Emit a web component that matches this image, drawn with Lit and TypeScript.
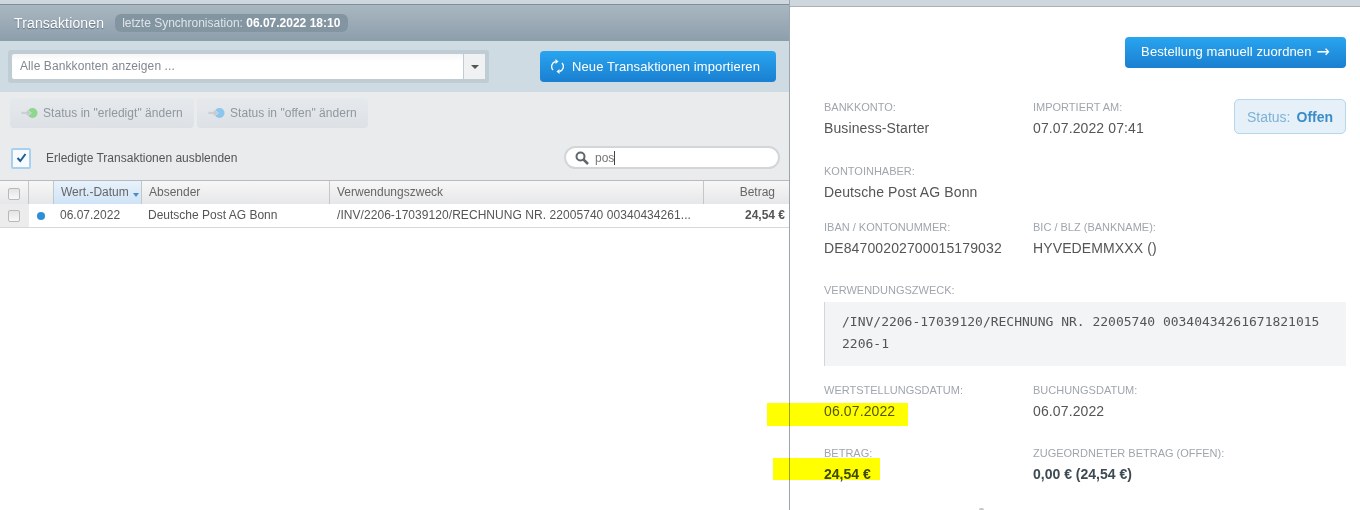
import { LitElement, html, css } from "lit";
import { customElement } from "lit/decorators.js";

@customElement("app-root")
export class AppRoot extends LitElement {
  static styles = css`
    :host { display: block; width: 1360px; height: 510px; overflow: hidden; position: relative; background: #fff; font-family: "Liberation Sans", Arial, sans-serif; color: #555; }
    .page { display: flex; height: 510px; }
    .left { width: 789px; flex: none; display: flex; flex-direction: column; border-right: 1px solid #9aa5ad; }
    .strip-l { height: 4px; background: #ced7dd; border-bottom: 1px solid #7f8e99; flex: none; }
    .head { height: 36px; flex: none; display: flex; align-items: center; padding-left: 14px; gap: 11px; background: linear-gradient(#a9b7c1, #8d9eab); }
    .title { font-size: 14px; letter-spacing: .15px; color: #fff; text-shadow: 0 1px 1px #5f6f7b; }
    .sync { height: 18px; border-radius: 6px; background: #8495a2; color: #dde4e8; font-size: 12px; line-height: 18px; padding: 0 8px 0 7px; white-space: nowrap; }
    .sync b { color: #fff; }
    .tools { height: 51px; flex: none; display: flex; align-items: center; justify-content: space-between; padding: 0 13px 0 8px; background: #cfdbe2; }
    .select-halo { width: 473px; height: 25px; padding: 4px; border-radius: 3px; background: #c0ccd3; display: flex; }
    .select-text { flex: 1; background: linear-gradient(#f6f6f6, #fff 30%); border-radius: 2px 0 0 2px; font-size: 12px; letter-spacing: .1px; line-height: 25px; color: #808890; padding-left: 8px; }
    .select-btn { width: 21px; margin-left: 1px; background: #f0f1f2; display: flex; align-items: center; justify-content: center; }
    .caret { width: 0; height: 0; border: 4px solid transparent; border-top: 4px solid #555; border-bottom: 0; }
    .primary { background: linear-gradient(#29a5ef, #1a7fd0); color: #fff; border-radius: 4px; font-size: 13px; letter-spacing: .1px; display: flex; align-items: center; white-space: nowrap; box-sizing: border-box; }
    .import { width: 236px; height: 31px; padding-left: 11px; gap: 8px; }
    .filters { height: 88px; flex: none; background: #e9ebed; display: flex; flex-direction: column; padding: 6px 9px 0 10px; box-sizing: border-box; }
    .actions { display: flex; gap: 3px; }
    .act { height: 30px; display: flex; align-items: center; gap: 5px; padding-left: 10px; box-sizing: border-box; font-size: 12px; letter-spacing: .04px; color: #8f979e; border-radius: 4px; background: linear-gradient(#e6e9ec, #dde1e6); }
    .act.a { width: 184px; } .act.b { width: 171px; }
    .filter-row { display: flex; align-items: center; justify-content: space-between; margin-top: 18px; }
    .check-wrap { display: flex; align-items: center; gap: 15px; font-size: 12px; color: #555; padding: 1px 0 0 1px; }
    .check { width: 20px; height: 21px; box-sizing: border-box; border: 2px solid #a9d0ef; border-radius: 2px; background: #f8fbfe; display: flex; align-items: center; justify-content: center; }
    .search { width: 216px; height: 23px; box-sizing: border-box; border: 2px solid #d2d6d8; border-radius: 12px; background: #fff; display: flex; align-items: center; padding-left: 9px; gap: 6px; font-size: 12px; color: #777; }
    .cursor { display: inline-block; width: 1px; height: 14px; background: #444; vertical-align: -3px; }
    .thead, .trow { display: grid; grid-template-columns: 29px 25px 88px 188px 374px 85px; font-size: 12px; }
    .thead { height: 24px; box-sizing: border-box; border-top: 1px solid #b5bbbf; background: linear-gradient(#f7f7f7, #e6e7e8); color: #666; line-height: 23px; flex: none; }
    .thead > div { border-right: 1px solid #c4c7c9; padding-left: 7px; box-sizing: border-box; white-space: nowrap; }
    .thead > .nob { border-right: 0; }
    .thead > .sorted { background: linear-gradient(#e8f2fb, #cfe3f6); position: relative; }
    .sort { position: absolute; right: 2px; top: 12px; width: 0; height: 0; border: 3px solid transparent; border-top: 4px solid #4b8cc4; border-bottom: 0; }
    .right-h { text-align: right; padding-right: 14px; }
    .thead > .cell-c { padding: 3px 1px 0 0; display: flex; align-items: center; justify-content: center; }
    .trow > .cell-c { padding: 0 1px 0 0; display: flex; align-items: center; justify-content: center; }
    .trow { height: 24px; box-sizing: border-box; border-bottom: 1px solid #d5d7d9; line-height: 22px; color: #555; flex: none; }
    .trow > div { white-space: nowrap; overflow: hidden; padding-left: 6px; box-sizing: border-box; }
    .trow > .shade { background: #ececed; }
    .trow > .purpose { padding-left: 7px; letter-spacing: .055px; }
    .trow > .amount { text-align: right; font-weight: 700; padding: 0 4px 0 0; }
    .box { width: 12px; height: 12px; box-sizing: border-box; border: 1px solid #b7b9bb; border-radius: 2px; background: linear-gradient(#e4e4e4, #f8f8f8); }
    .dot { width: 8px; height: 8px; border-radius: 50%; background: #2d8fd5; }
    .right { flex: 1; min-width: 0; display: flex; flex-direction: column; }
    .strip-r { height: 6px; background: #ced7dd; border-bottom: 1px solid #a9b2b9; flex: none; }
    .detail { padding: 30px 14px 0 34px; display: flex; flex-direction: column; }
    .assign { align-self: flex-end; width: 221px; height: 31px; justify-content: center; gap: 5px; font-size: 13px; padding-bottom: 2px; }
    .arrow { font-family: "DejaVu Sans", sans-serif; font-size: 16px; line-height: 16px; letter-spacing: 0; }
    .grid { display: grid; grid-template-columns: 209px 1fr; }
    .row1 { margin-top: 32px; position: relative; }
    .label { font-size: 11px; line-height: 14px; color: #a0a6ad; text-transform: uppercase; white-space: nowrap; }
    .value { font-size: 14px; letter-spacing: .12px; line-height: 16px; margin-top: 6px; color: #555; white-space: nowrap; }
    .value.strong { font-weight: 700; letter-spacing: 0; color: #3d4a52; }
    .status { position: absolute; right: 0; top: -1px; width: 112px; height: 35px; box-sizing: border-box; border: 1px solid #b5d6ec; border-radius: 5px; background: #e5f0f8; font-size: 14px; color: #7fb2d6; display: flex; align-items: center; justify-content: center; gap: 6px; }
    .status b { color: #3a8cc9; }
    .mt-holder { margin-top: 28px; }
    .mt-a { margin-top: 20px; }
    .mt-purpose { margin-top: 27px; }
    .mt-dates { margin-top: 17px; }
    .mt-amount { margin-top: 27px; }
    .code { margin-top: 5px; height: 64px; box-sizing: border-box; background: #f3f4f6; border-left: 1px solid #d3d6d9; padding: 9px 0 0 17px; font-family: "DejaVu Sans Mono", monospace; font-size: 13px; line-height: 22px; color: #555; white-space: pre; }
    .hl { position: absolute; background: #ffff00; mix-blend-mode: multiply; }
    .hl1 { left: 767px; top: 403px; width: 141px; height: 23px; }
    .hl2 { left: 773px; top: 458px; width: 107px; height: 22px; }
    .speck { position: absolute; left: 979px; top: 508px; width: 5px; height: 2px; border-radius: 2px 2px 0 0; background: #c4c7c9; }
  `;

  private statusIcon(color: string) {
    return html`<svg width="18" height="12" viewBox="0 0 18 12">
      <circle cx="12.500" cy="6" r="5" fill="${color}"></circle>
      <path d="M1 4.800h5.500V2.200L11.500 6L6.500 9.800V7.200H1z" fill="#c6cbd0" stroke="#e8ebed" stroke-width=".5"></path>
    </svg>`;
  }

  render() {
    return html`
      <div class="page">
        <section class="left">
          <div class="strip-l"></div>
          <header class="head">
            <span class="title">Transaktionen</span>
            <span class="sync">letzte Synchronisation: <b>06.07.2022 18:10</b></span>
          </header>
          <div class="tools">
            <div class="select-halo">
              <div class="select-text">Alle Bankkonten anzeigen ...</div>
              <div class="select-btn"><span class="caret"></span></div>
            </div>
            <div class="primary import">
              <svg width="13" height="15" viewBox="0 0 13 15" fill="none" stroke="#fff" stroke-width="1.300">
                <path d="M2 11A5.200 5.200 0 0 1 4.500 2.500"></path>
                <path d="M11 4A5.200 5.200 0 0 1 8.500 12.500"></path>
                <path d="M4.500 0l3 2.500l-3 2.500z" fill="#fff" stroke="none"></path>
                <path d="M8.500 10l-3 2.500l3 2.500z" fill="#fff" stroke="none"></path>
              </svg>
              Neue Transaktionen importieren
            </div>
          </div>
          <div class="filters">
            <div class="actions">
              <div class="act a">${this.statusIcon("#8fd68f")}Status in "erledigt" ändern</div>
              <div class="act b">${this.statusIcon("#8cc6ec")}Status in "offen" ändern</div>
            </div>
            <div class="filter-row">
              <label class="check-wrap">
                <span class="check">
                  <svg width="11" height="10" viewBox="0 0 11 10" fill="none" stroke="#1d5c9a" stroke-width="2"><path d="M1.500 5l2.800 3L9.500 1"></path></svg>
                </span>
                Erledigte Transaktionen ausblenden
              </label>
              <div class="search">
                <svg width="14" height="14" viewBox="0 0 14 14" fill="none" stroke="#5f666c" stroke-width="2"><circle cx="5.500" cy="5.500" r="4"></circle><path d="M8.500 8.500L13 13" stroke-width="2.500"></path></svg>
                <span>pos<span class="cursor"></span></span>
              </div>
            </div>
          </div>
          <div class="thead">
            <div class="cell-c"><span class="box"></span></div>
            <div></div>
            <div class="sorted">Wert.-Datum<span class="sort"></span></div>
            <div>Absender</div>
            <div>Verwendungszweck</div>
            <div class="nob right-h">Betrag</div>
          </div>
          <div class="trow">
            <div class="cell-c shade"><span class="box"></span></div>
            <div class="cell-c"><span class="dot"></span></div>
            <div>06.07.2022</div>
            <div>Deutsche Post AG Bonn</div>
            <div class="purpose">/INV/2206-17039120/RECHNUNG NR. 22005740 00340434261...</div>
            <div class="amount">24,54 €</div>
          </div>
        </section>
        <section class="right">
          <div class="strip-r"></div>
          <div class="detail">
            <div class="primary assign">Bestellung manuell zuordnen <span class="arrow">→</span></div>
            <div class="grid row1">
              <div><div class="label">Bankkonto:</div><div class="value">Business-Starter</div></div>
              <div><div class="label">Importiert am:</div><div class="value">07.07.2022 07:41</div></div>
              <div class="status">Status: <b>Offen</b></div>
            </div>
            <div class="grid mt-holder">
              <div><div class="label">Kontoinhaber:</div><div class="value">Deutsche Post AG Bonn</div></div>
            </div>
            <div class="grid mt-a">
              <div><div class="label">IBAN / Kontonummer:</div><div class="value">DE84700202700015179032</div></div>
              <div><div class="label">BIC / BLZ (Bankname):</div><div class="value">HYVEDEMMXXX ()</div></div>
            </div>
            <div class="mt-purpose">
              <div class="label">Verwendungszweck:</div>
              <div class="code">/INV/2206-17039120/RECHNUNG NR. 22005740 00340434261671821015
2206-1</div>
            </div>
            <div class="grid mt-dates">
              <div><div class="label">Wertstellungsdatum:</div><div class="value">06.07.2022</div></div>
              <div><div class="label">Buchungsdatum:</div><div class="value">06.07.2022</div></div>
            </div>
            <div class="grid mt-amount">
              <div><div class="label">Betrag:</div><div class="value strong">24,54 €</div></div>
              <div><div class="label">Zugeordneter Betrag (offen):</div><div class="value strong">0,00 € (24,54 €)</div></div>
            </div>
          </div>
        </section>
      </div>
      <div class="hl hl1"></div>
      <div class="hl hl2"></div>
      <div class="speck"></div>
    `;
  }
}
